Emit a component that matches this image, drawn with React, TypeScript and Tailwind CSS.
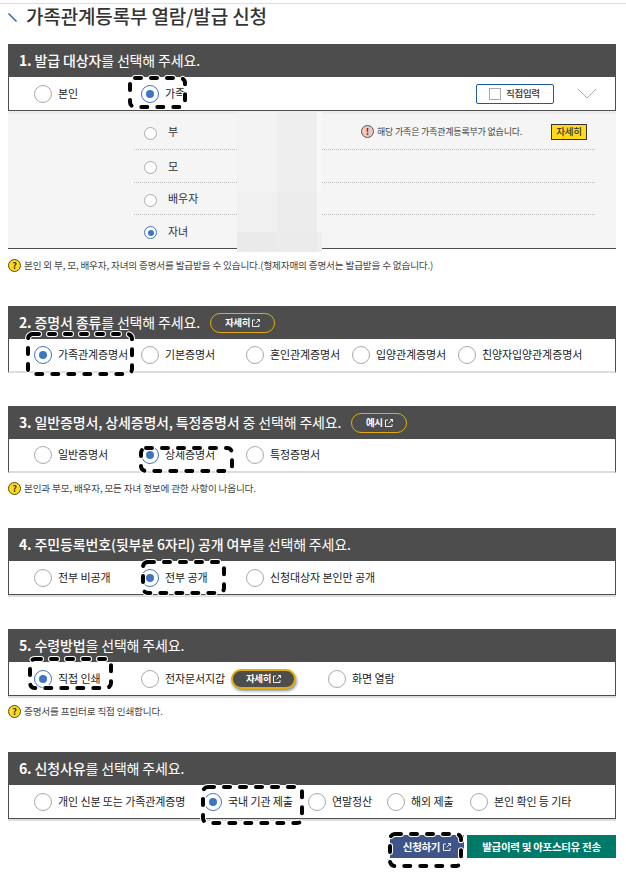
import type { ReactNode } from 'react';

const FONT = "font-['Noto_Sans_CJK_KR','Noto_Sans',sans-serif]";

const Radio = ({ checked = false, small = false }: { checked?: boolean; small?: boolean }) => (
  <span
    className={`flex shrink-0 items-center justify-center rounded-full bg-white ${
      small ? 'mt-[3px] h-[13px] w-[13px] border' : 'h-[18px] w-[18px] border-[1.5px]'
    } ${checked ? 'border-[#3f74c2]' : 'border-[#aaaaaa]'}`}
  >
    {checked && <span className={`rounded-full bg-[#3f74c2] ${small ? 'h-[6px] w-[6px]' : 'h-[8px] w-[8px]'}`} />}
  </span>
);

const Option = ({ label, checked, width }: { label: string; checked?: boolean; width: string }) => (
  <div className={`flex shrink-0 items-center gap-[6px] ${width}`}>
    <Radio checked={checked} />
    <span className="mt-[-1px] whitespace-nowrap text-[11px] tracking-[-0.1px] text-[#222]">{label}</span>
  </div>
);

const LinkIcon = () => (
  <svg width="8" height="8" viewBox="0 0 8 8" fill="none" stroke="currentColor" strokeWidth="0.9">
    <path d="M3 1H0.5V7.5H7V5" />
    <path d="M3.5 4.5L7.5 0.5M5 0.5H7.5V3" />
  </svg>
);

const Pill = ({ label, width, filled }: { label: string; width: string; filled?: boolean }) => (
  <span
    className={`flex h-5 items-center justify-center gap-[2px] rounded-full border border-[#e0ae0c] text-white ${width} ${
      filled ? 'border-2 bg-[#4d4d4d] shadow-[1px_2px_3px_rgba(0,0,0,0.45)]' : ''
    }`}
  >
    <span className="text-[9.5px] font-bold tracking-[-0.4px]">{label}</span>
    <LinkIcon />
  </span>
);

const Section = ({
  title,
  rest,
  num,
  extra,
  children,
  light,
  className,
}: {
  title: string;
  rest: string;
  num: string;
  extra?: ReactNode;
  children: ReactNode;
  light?: boolean;
  className: string;
}) => (
  <section className={className}>
    <div className="flex h-[33px] items-center gap-[10px] bg-[#4d4d4d] pl-[11px] text-white">
      <h2 className="whitespace-nowrap text-[14px] font-normal tracking-[-0.15px]">
        <span className="font-bold">{num}</span> <span className="font-medium">{title}</span>
        {rest}
      </h2>
      {extra}
    </div>
    <div
      className={`flex h-[34px] items-center border-x border-[#4d4d4d] pl-[25px] ${
        light
          ? 'border-b-2 border-b-[#dddddd]'
          : 'border-b border-b-[#4d4d4d] shadow-[0_2px_0_#dddddd]'
      }`}
    >
      {children}
    </div>
  </section>
);

const Note = ({ text }: { text: string }) => (
  <div className="flex h-[13px] items-center gap-[3px]">
    <span className="flex h-[13px] w-[13px] shrink-0 items-center justify-center rounded-full border border-[#5a4a00] bg-[#ffd91a] text-[9px] font-bold leading-none text-[#333]">
      ?
    </span>
    <span className="whitespace-nowrap text-[9.6px] tracking-[-0.15px] text-[#444]">{text}</span>
  </div>
);

const FamilyRow = ({ label, checked, height, last, children }: { label: string; checked?: boolean; height: string; last?: boolean; children?: ReactNode }) => (
  <div className={`flex items-center pl-[10px] ${height} ${last ? '' : 'border-b border-dotted border-[#bbbbbb]'}`}>
    <div className="flex w-[217px] shrink-0 items-center gap-[11px]">
      <Radio small checked={checked} />
      <span className="text-[11px] text-[#333]">{label}</span>
    </div>
    {children}
  </div>
);

// the black dashed marks someone drew over the screenshot
const Mark = ({ w, h, className }: { w: number; h: number; className: string }) => (
  <svg width={w} height={h} className={`absolute ${className}`} fill="none">
    <rect x="3" y="3" width={w - 6} height={h - 6} rx="5" stroke="#fff" strokeWidth="6" strokeDasharray="6 10" strokeLinecap="round" />
    <rect x="3" y="3" width={w - 6} height={h - 6} rx="5" stroke="#000" strokeWidth="4" strokeDasharray="6 10" strokeLinecap="round" />
  </svg>
);

export default function App() {
  return (
    <div className={`relative h-[882px] w-[626px] overflow-hidden bg-white pt-[3px] ${FONT}`}>
      <div className="h-px bg-[#dddddd]" />
      <div className="flex h-[25px] items-center gap-[9px] pl-[8px]">
        <svg width="9" height="9" viewBox="0 0 9 9" className="mt-[2px]">
          <path d="M0.5 0.5L8.5 8.5" stroke="#2f6aa8" strokeWidth="1.5" />
        </svg>
        <h1 className="text-[19px] font-medium tracking-[-0.15px] text-[#333]">가족관계등록부 열람/발급 신청</h1>
      </div>

      <div className="pl-[8px] pr-[10px]">
        <Section num="1." title="발급 대상자" rest="를 선택해 주세요." className="mt-[15px]">
          <Option label="본인" width="w-[107px]" />
          <Option label="가족" checked width="w-[335px]" />
          <div className="flex h-5 w-[78px] items-center gap-[5px] rounded-[2px] border border-[#1f5a9a] pl-[12px]">
            <span className="h-3 w-3 border border-[#aaaaaa]" />
            <span className="text-[9.5px] font-medium tracking-[-0.3px] text-[#333]">직접입력</span>
          </div>
          <svg width="20" height="11" viewBox="0 0 20 11" fill="none" className="ml-[23px]">
            <path d="M1 1L10 10L19 1" stroke="#aaaaaa" />
          </svg>
        </Section>

        {/* family list */}
        <div className="h-[138px] border-b border-t-[3px] border-b-[#4d4d4d] border-t-[#eeeeee] bg-[#f5f5f5] pl-[126px] pr-[21px]">
          <FamilyRow label="부" height="h-[36px]">
            <div className="flex items-center gap-[3px]">
              <span className="flex h-[13px] w-[13px] shrink-0 items-center justify-center rounded-full border border-[#555] bg-[#f8c4c0] text-[9px] font-bold leading-none text-[#333]">
                !
              </span>
              <span className="w-[171px] whitespace-nowrap text-[9px] tracking-[-0.2px] text-[#444]">해당 가족은 가족관계등록부가 없습니다.</span>
              <span className="flex h-[16px] w-[36px] items-center justify-center border border-[#333] bg-[#ffd91a] text-[9.5px] font-medium tracking-[-0.3px] text-[#333]">
                자세히
              </span>
            </div>
          </FamilyRow>
          <FamilyRow label="모" height="h-[33px]" />
          <FamilyRow label="배우자" height="h-[32px]" />
          <FamilyRow label="자녀" checked height="h-[32px]" last />
        </div>

        <div className="mt-[10px]">
          <Note text="본인 외 부, 모, 배우자, 자녀의 증명서를 발급받을 수 있습니다.(형제자매의 증명서는 발급받을 수 없습니다.)" />
        </div>

        <Section num="2." title="증명서 종류" rest="를 선택해 주세요." light extra={<Pill label="자세히" width="w-[65px]" />} className="mt-[34px]">
          <Option label="가족관계증명서" checked width="w-[107px]" />
          <Option label="기본증명서" width="w-[105px]" />
          <Option label="혼인관계증명서" width="w-[106px]" />
          <Option label="입양관계증명서" width="w-[106px]" />
          <Option label="친양자입양관계증명서" width="w-[120px]" />
        </Section>

        <Section num="3." title="일반증명서, 상세증명서, 특정증명서" rest=" 중 선택해 주세요." light extra={<Pill label="예시" width="w-[56px]" />} className="mt-[33px]">
          <Option label="일반증명서" width="w-[107px]" />
          <Option label="상세증명서" checked width="w-[105px]" />
          <Option label="특정증명서" width="w-[106px]" />
        </Section>

        <div className="mt-[9px]">
          <Note text="본인과 부모, 배우자, 모든 자녀 정보에 관한 사항이 나옵니다." />
        </div>

        <Section num="4." title="주민등록번호(뒷부분 6자리) 공개 여부" rest="를 선택해 주세요." className="mt-[33px]">
          <Option label="전부 비공개" width="w-[107px]" />
          <Option label="전부 공개" checked width="w-[105px]" />
          <Option label="신청대상자 본인만 공개" width="w-[150px]" />
        </Section>

        <Section num="5." title="수령방법" rest="을 선택해 주세요." className="mt-[34px]">
          <Option label="직접 인쇄" checked width="w-[107px]" />
          <Option label="전자문서지갑" width="w-[90px]" />
          <Pill label="자세히" filled width="w-[65px]" />
          <div className="ml-[32px]">
            <Option label="화면 열람" width="w-[100px]" />
          </div>
        </Section>

        <div className="mt-[9px]">
          <Note text="증명서를 프린터로 직접 인쇄합니다." />
        </div>

        <Section num="6." title="신청사유" rest="를 선택해 주세요." className="mt-[34px]">
          <Option label="개인 신분 또는 가족관계증명" width="w-[170px]" />
          <Option label="국내 기관 제출" checked width="w-[104px]" />
          <Option label="연말정산" width="w-[79px]" />
          <Option label="해외 제출" width="w-[83px]" />
          <Option label="본인 확인 등 기타" width="w-[120px]" />
        </Section>

        <div className="mt-[16px] flex justify-end gap-[3px]">
          <button className="flex h-[23px] w-[74px] items-center justify-center gap-[3px] bg-[#3f5488] text-[10.5px] font-bold tracking-[-0.3px] text-white">
            신청하기 <LinkIcon />
          </button>
          <button className="h-[23px] w-[149px] bg-[#007a68] text-[10.5px] font-bold tracking-[-0.3px] text-white">
            발급이력 및 아포스티유 전송
          </button>
        </div>
      </div>

      {/* mosaic that hides the names */}
      <div className="absolute left-[237px] top-[112px] grid h-[140px] w-[85px] grid-cols-[40px_40px_5px] grid-rows-[80px_40px_20px]">
        <div className="bg-[#f3f3f3]" />
        <div className="bg-[#eeeeee]" />
        <div className="bg-[#f7f7f7]" />
        <div className="bg-[#f0f0f0]" />
        <div className="bg-[#ececec]" />
        <div className="bg-[#f5f5f5]" />
        <div className="bg-[#eaeaea]" />
        <div className="bg-[#ebebeb]" />
        <div className="bg-[#eeeeee]" />
      </div>

      <Mark w={61} h={35} className="left-[127px] top-[75px]" />
      <Mark w={110} h={46} className="left-[25px] top-[331px]" />
      <Mark w={97} h={29} className="left-[138px] top-[445px]" />
      <Mark w={87} h={37} className="left-[140px] top-[559px]" />
      <Mark w={87} h={35} className="left-[27px] top-[656px]" />
      <Mark w={105} h={42} className="left-[200px] top-[784px]" />
      <Mark w={77} h={38} className="left-[387px] top-[831px]" />
    </div>
  );
}
